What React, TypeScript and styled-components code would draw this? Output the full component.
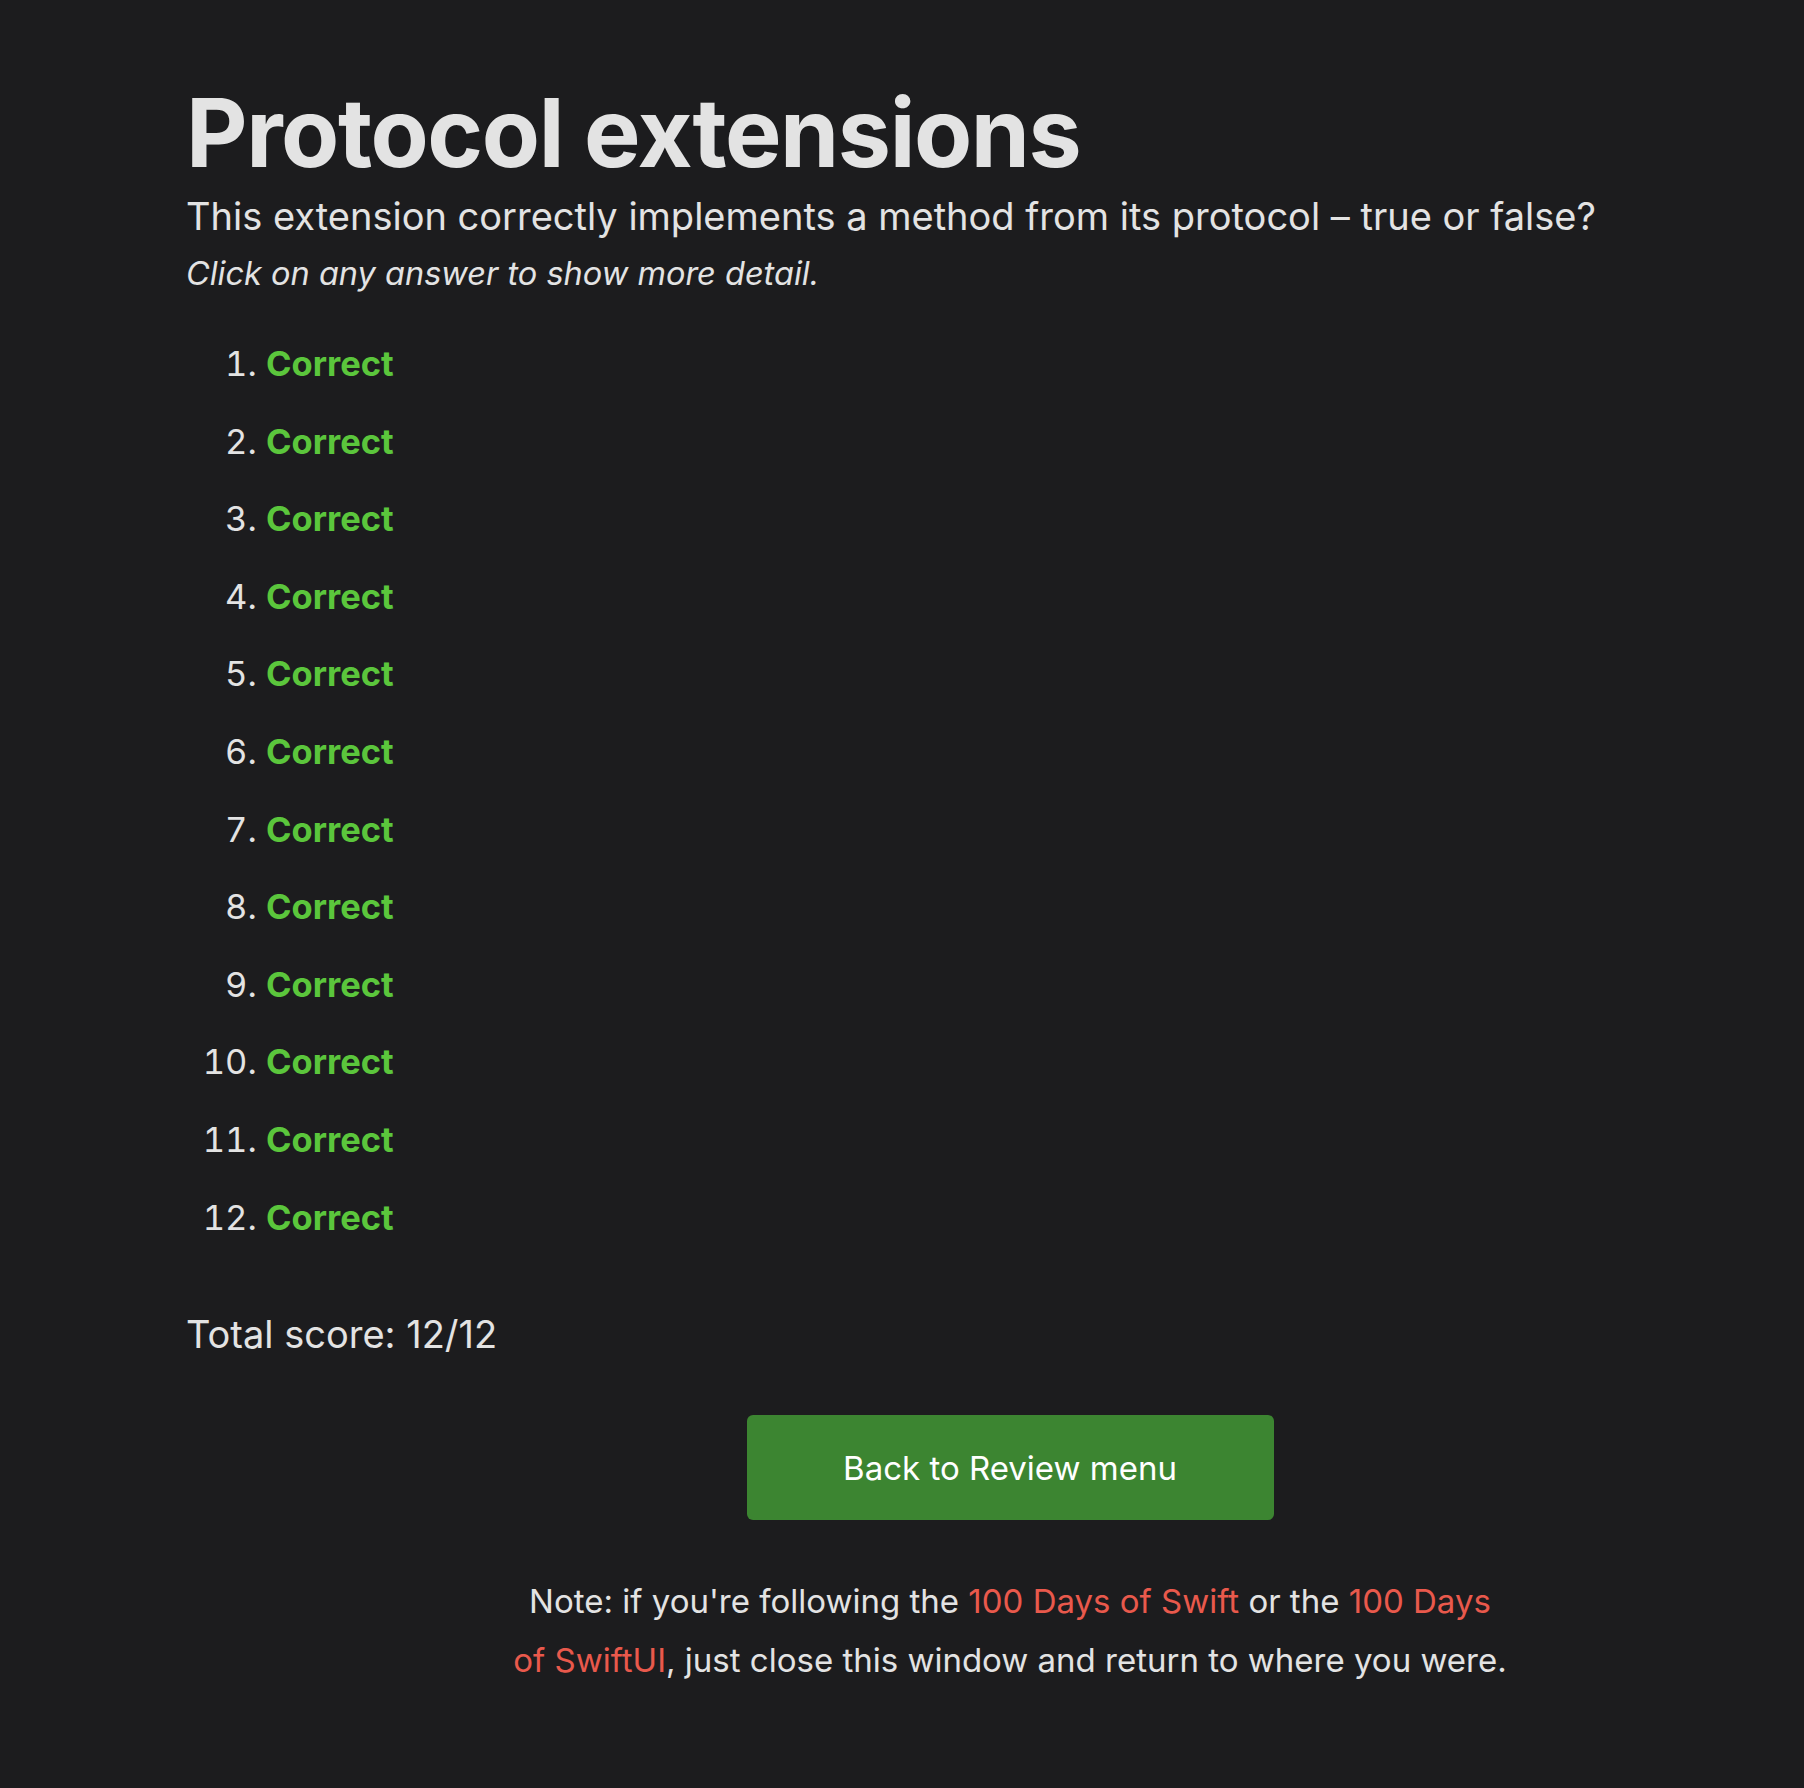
import styled, { createGlobalStyle } from 'styled-components'

const GlobalStyle = createGlobalStyle`
  html, body {
    margin: 0;
    padding: 0;
    background: #1c1c1e;
  }
  body {
    font-family: Inter, "Noto Sans", "Liberation Sans", sans-serif;
    color: #e3e3e3;
  }
`

const Page = styled.main`
  min-height: 1788px;
  box-sizing: border-box;
  padding: 78px 8px 0 186px;
  display: flex;
  flex-direction: column;
`

const Title = styled.h1`
  margin: 0;
  font-size: 95px;
  font-weight: 700;
  line-height: 110px;
  letter-spacing: -1.4px;
  color: #e3e3e3;
`

const Subtitle = styled.p`
  margin: 2px 0 0;
  font-size: 38px;
  line-height: 52px;
`

const Hint = styled.p`
  margin: 6px 0 0;
  font-size: 32.5px;
  font-style: italic;
  line-height: 52px;
`

const Answers = styled.ol`
  margin: 25px 0 0;
  padding-left: 80px;
  font-size: 34.5px;
  line-height: 77.6px;
`

const Answer = styled.li`
  &::marker {
    color: #e3e3e3;
  }
`

const Verdict = styled.span<{ $ok: boolean }>`
  font-weight: 700;
  color: ${(p) => (p.$ok ? '#5bc63c' : '#e9594c')};
`

const Score = styled.p`
  margin: 48px 0 0;
  font-size: 38px;
  line-height: 60px;
`

const Footer = styled.section`
  display: flex;
  flex-direction: column;
  align-items: center;
  padding-left: 38px;
`

const BackButton = styled.button`
  margin-top: 51px;
  width: 527px;
  height: 105px;
  border: none;
  border-radius: 6px;
  background: #3c8531;
  color: #fff;
  font-family: inherit;
  font-size: 33px;
  cursor: pointer;
`

const Note = styled.p`
  margin: 52px 0 0;
  width: 1000px;
  text-align: center;
  font-size: 33px;
  line-height: 58.7px;
`

const Link = styled.a`
  color: #e9594c;
  text-decoration: none;
`

const answers = Array.from({ length: 12 }, () => true)

const App = () => {
  const total = answers.filter(Boolean).length

  return (
    <>
      <GlobalStyle />
      <Page>
        <Title>Protocol extensions</Title>
        <Subtitle>
          This extension correctly implements a method from its protocol – true or false?
        </Subtitle>
        <Hint>Click on any answer to show more detail.</Hint>

        <Answers>
          {answers.map((ok, i) => (
            <Answer key={i}>
              <Verdict $ok={ok}>{ok ? 'Correct' : 'Wrong'}</Verdict>
            </Answer>
          ))}
        </Answers>

        <Score>
          Total score: {total}/{answers.length}
        </Score>

        <Footer>
          <BackButton>Back to Review menu</BackButton>
          <Note>
            Note: if you're following the <Link href="#">100 Days of Swift</Link> or the{' '}
            <Link href="#">100 Days of SwiftUI</Link>, just close this window and return to
            where you were.
          </Note>
        </Footer>
      </Page>
    </>
  )
}

export default App
